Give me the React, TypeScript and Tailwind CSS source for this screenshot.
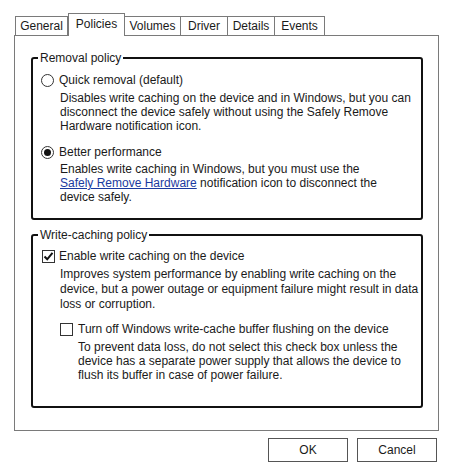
const font = "font-['Liberation_Sans',Arial,sans-serif]";

function Tab({ label, active, w }: { label: string; active?: boolean; w: string }) {
  if (active) {
    return (
      <div
        className={`${w} relative z-10 -mb-px flex h-[23px] items-start justify-center border border-b-0 border-[#7a7a7a] bg-white pt-[3px]`}
      >
        {label}
      </div>
    );
  }
  return (
    <div
      className={`${w} mt-[3px] flex h-[19px] items-center justify-center border border-b-0 border-l-0 border-[#7a7a7a] bg-white first:border-l`}
    >
      {label}
    </div>
  );
}

function Radio({ checked }: { checked?: boolean }) {
  return (
    <span className="flex h-[13px] w-[13px] shrink-0 items-center justify-center rounded-full border border-[#333]">
      {checked && <span className="h-[7px] w-[7px] rounded-full bg-[#111]" />}
    </span>
  );
}

function Check({ checked }: { checked?: boolean }) {
  return (
    <span className="flex h-[13px] w-[13px] shrink-0 items-center justify-center border border-[#333] bg-white">
      {checked && (
        <svg width="11" height="11" viewBox="0 0 11 11">
          <path d="M1.5 5.5 L4.2 8.3 L9.5 1.8" fill="none" stroke="#111" strokeWidth="2" />
        </svg>
      )}
    </span>
  );
}

function Group({ title, children, h }: { title: string; children: React.ReactNode; h: string }) {
  return (
    <fieldset className={`${h} rounded-[3px] border-2 border-[#111] px-0`}>
      <legend className="ml-[5px] px-[2px] leading-[14px]">{title}</legend>
      {children}
    </fieldset>
  );
}

export default function App() {
  return (
    <div className={`${font} h-[471px] w-[450px] bg-white text-[12px] leading-[14px] text-[#1a1a1a]`}>
      <div className="flex pl-[15px] pt-[13px]">
        <Tab label="General" w="w-[53px]" />
        <Tab label="Policies" active w="w-[57px]" />
        <Tab label="Volumes" w="w-[56px]" />
        <Tab label="Driver" w="w-[47px]" />
        <Tab label="Details" w="w-[47px]" />
        <Tab label="Events" w="w-[50px]" />
      </div>
      <div className="ml-[14px] flex h-[396px] w-[425px] flex-col gap-[8px] border border-[#7a7a7a] pl-[16px] pr-[15px] pt-[15px]">
        <Group title="Removal policy" h="h-[169px]">
          <div className="pl-[8px] pt-[8px]">
            <div className="flex items-center gap-[5px]">
              <Radio />
              <span>Quick removal (default)</span>
            </div>
            <p className="mt-[4px] whitespace-nowrap pl-[19px]">
              Disables write caching on the device and in Windows, but you can
              <br />
              disconnect the device safely without using the Safely Remove
              <br />
              Hardware notification icon.
            </p>
            <div className="mt-[12px] flex items-center gap-[5px]">
              <Radio checked />
              <span>Better performance</span>
            </div>
            <p className="mt-[3px] whitespace-nowrap pl-[19px]">
              Enables write caching in Windows, but you must use the
              <br />
              <span className="text-[#1b3aa0] underline">Safely Remove Hardware</span> notification
              icon to disconnect the
              <br />
              device safely.
            </p>
          </div>
        </Group>
        <Group title="Write-caching policy" h="h-[180px]">
          <div className="pl-[9px] pt-[7px]">
            <div className="flex items-center gap-[4px]">
              <Check checked />
              <span>Enable write caching on the device</span>
            </div>
            <p className="mt-[4px] whitespace-nowrap pl-[18px] leading-[15px]">
              Improves system performance by enabling write caching on the
              <br />
              device, but a power outage or equipment failure might result in data
              <br />
              loss or corruption.
            </p>
            <div className="ml-[18px] mt-[10px] flex items-center gap-[5px]">
              <Check />
              <span>Turn off Windows write-cache buffer flushing on the device</span>
            </div>
            <p className="mt-[4px] whitespace-nowrap pl-[36px]">
              To prevent data loss, do not select this check box unless the
              <br />
              device has a separate power supply that allows the device to
              <br />
              flush its buffer in case of power failure.
            </p>
          </div>
        </Group>
      </div>
      <div className="flex justify-end gap-[9px] pr-[13px] pt-[7px]">
        <button className="h-[24px] w-[80px] border border-[#555] bg-white">OK</button>
        <button className="h-[24px] w-[80px] border border-[#555] bg-white">Cancel</button>
      </div>
    </div>
  );
}
